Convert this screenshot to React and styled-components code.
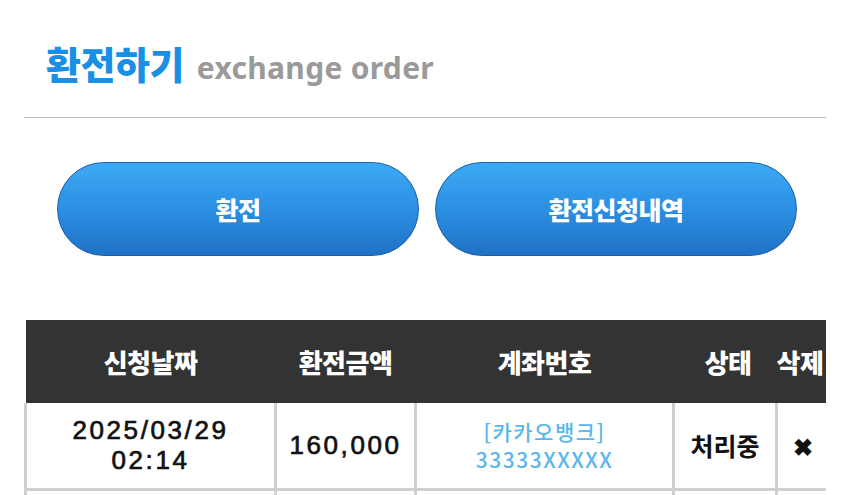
import React from 'react';
import styled, { createGlobalStyle } from 'styled-components';

const GlobalStyle = createGlobalStyle`
  html, body {
    margin: 0;
    padding: 0;
    background: #fff;
    font-family: "Noto Sans CJK KR", "Noto Sans", sans-serif;
  }
  * { box-sizing: border-box; }
`

const Page = styled.div`
  width: 850px;
  height: 495px;
  padding: 0 24px;
  overflow: hidden;
`

const TitleBar = styled.div`
  display: flex;
  align-items: baseline;
  gap: 13px;
  padding: 35px 0 0 22px;
  height: 118px;
  border-bottom: 1px solid #bcbcbc;
`

const TitleKo = styled.h1`
  margin: 0;
  font-size: 38px;
  font-weight: 900;
  color: #1a8fe6;
  letter-spacing: -0.5px;
`

const TitleEn = styled.span`
  font-family: "Noto Sans", sans-serif;
  font-size: 30px;
  font-weight: 700;
  color: #9a9a9a;
  letter-spacing: 0.3px;
`

const ButtonRow = styled.div`
  display: flex;
  gap: 16px;
  padding: 0 29px 0 33px;
  margin-top: 44px;
`

const PillButton = styled.button`
  flex: 0 0 362px;
  height: 94px;
  border-radius: 47px;
  border: 1.5px solid #1c5fa8;
  background: linear-gradient(to bottom, #3daaf6 0%, #2b8fe2 50%, #1f72c6 100%);
  color: #fff;
  font-family: "Noto Sans CJK KR", sans-serif;
  font-size: 25px;
  font-weight: 900;
  letter-spacing: -0.5px;
  cursor: pointer;
`

const TableWrap = styled.div`
  margin-top: 64px;
  width: 802px;
  overflow: hidden;
`

const Table = styled.table`
  width: 803px;
  table-layout: fixed;
  border-collapse: collapse;
`

const Th = styled.th`
  background: #333;
  color: #fff;
  height: 83px;
  font-size: 26px;
  font-weight: 900;
  letter-spacing: -0.5px;
  padding: 0;
  text-align: ${p => p.$align || 'center'};
  padding-right: ${p => p.$pr || 0}px;
  white-space: nowrap;
  overflow: hidden;
`

const Td = styled.td`
  border: 3px solid #cfcfcf;
  border-top: 0;
  height: 86px;
  padding: 0;
  text-align: center;
  color: #111;
  font-size: ${p => p.$size || 26}px;
  font-weight: ${p => p.$weight || 500};
  line-height: 29px;
`

const NumText = styled.div`
  font-family: "Liberation Sans", Arial, sans-serif;
  font-size: 26px;
  font-weight: 400;
  -webkit-text-stroke: 0.7px #111;
  letter-spacing: 2.6px;
  line-height: 30px;
`

const Bank = styled.div`
  color: #5ab6ec;
  font-size: 21px;
  font-weight: 500;
  letter-spacing: 1.5px;
  line-height: 28px;
`

const rows = [
  { date: '2025/03/29', time: '02:14', amount: '160,000', bank: '[카카오뱅크]', account: '33333XXXXX', status: '처리중' },
  { date: '', time: '', amount: '', bank: '', account: '', status: '' },
];

const App = () => {
  return (
    <Page>
      <GlobalStyle />
      <TitleBar>
        <TitleKo>환전하기</TitleKo>
        <TitleEn>exchange order</TitleEn>
      </TitleBar>
      <ButtonRow>
        <PillButton>환전</PillButton>
        <PillButton>환전신청내역</PillButton>
      </ButtonRow>
      <TableWrap>
        <Table>
          <colgroup>
            <col style={{ width: 250 }} />
            <col style={{ width: 140 }} />
            <col style={{ width: 258 }} />
            <col style={{ width: 103 }} />
            <col style={{ width: 52 }} />
          </colgroup>
          <thead>
            <tr>
              <Th>신청날짜</Th>
              <Th>환전금액</Th>
              <Th>계좌번호</Th>
              <Th $align="right" $pr={25}>상태</Th>
              <Th $align="left">삭제</Th>
            </tr>
          </thead>
          <tbody>
            {rows.map((r, i) => (
              <tr key={i}>
                <Td><NumText>{r.date}<br />{r.time}</NumText></Td>
                <Td><NumText>{r.amount}</NumText></Td>
                <Td>
                  <Bank>{r.bank}<br />{r.account}</Bank>
                </Td>
                <Td $size={25} $weight={700}>{r.status}</Td>
                <Td $size={24} $weight={900}>{r.status ? '✖' : ''}</Td>
              </tr>
            ))}
          </tbody>
        </Table>
      </TableWrap>
    </Page>
  )
}

export default App
